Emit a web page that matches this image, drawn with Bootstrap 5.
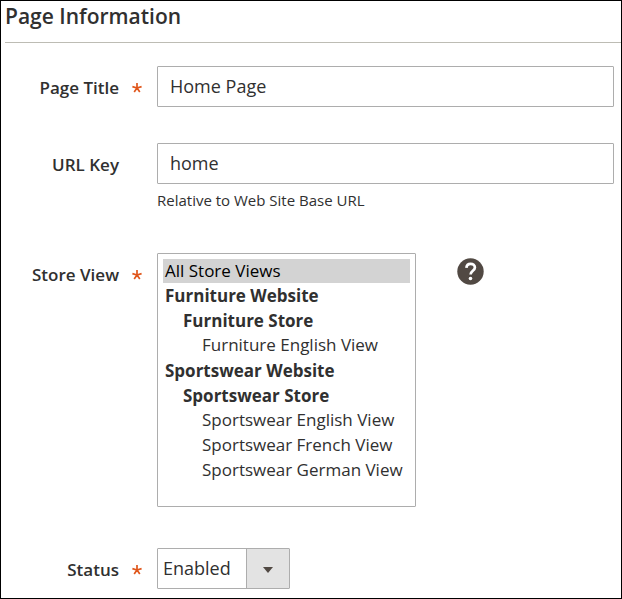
<!DOCTYPE html>
<html lang="en">
<head>
<meta charset="utf-8">
<meta name="viewport" content="width=device-width, initial-scale=1">
<title>Page Information</title>
<link href="https://cdn.jsdelivr.net/npm/bootstrap@5.3.0/dist/css/bootstrap.min.css" rel="stylesheet">
<style>
body { font-family: "Open Sans", "Noto Sans", sans-serif; color: #303030; background: #fff; }
.page-frame { border: 1px solid #000; min-height: 100vh; padding-left: 4px; }
.section-title { font-size: 21px; line-height: 30px; font-weight: 600; margin: 0; padding-bottom: 11px; border-bottom: 1px solid #bdbcb4; }
.field-list { display: grid; row-gap: 34px; padding-top: 23px; }
.field-row { display: grid; grid-template-columns: 114px 38px minmax(0, 1fr); padding-right: 7px; }
.field-label { font-size: 17px; line-height: 43px; font-weight: 600; text-align: right; }
.required-mark { color: #e0561b; padding-left: 13px; padding-top: 17px; line-height: 0; }
.field-row .form-control, .field-row .form-select { border: 1px solid #adadad; border-radius: 1px; font-size: 18px; color: #303030; background-color: #fff; }
.text-field { height: 41px; padding: 0 12px 1px; }
.field-note { font-size: 15px; line-height: 20px; margin: 6px 0 9px; }
.field-row .form-select.store-list[multiple][size] { width: 259px; height: 254px; padding: 5px; overflow: hidden; background-image: none; font-size: 17px; margin-bottom: 7px; }
.store-list option { height: 24px; min-height: 24px; line-height: 24px; padding: 0 2px; }
.store-list optgroup { font-weight: 700; padding: 1px 0 0; }
.store-list .store-group { padding-top: 1px; padding-left: 18px; }
.store-list optgroup option { height: 25px; min-height: 25px; font-weight: 400; padding-left: 21px; }
.store-list option:checked { background: #d3d3d3 linear-gradient(#d3d3d3, #d3d3d3); color: #000; }
.field-row .status-select {
  width: 133px; height: 41px; padding: 0 44px 1px 5px;
  background-image: url("data:image/svg+xml,%3Csvg xmlns='http://www.w3.org/2000/svg' viewBox='0 0 43 39'%3E%3Cpath fill='%23e3e3e3' d='M1 0h42v39H1z'/%3E%3Cpath fill='%23adadad' d='M0 0h1v39H0z'/%3E%3Cpath fill='%23514943' d='M17 18h10l-5 6z'/%3E%3C/svg%3E");
  background-size: 43px 39px; background-position: right center;
}
.help-button { margin-left: 41px; margin-top: 5px; width: 27px; height: 27px; }
</style>
</head>
<body>
<main class="page-frame">
  <h1 class="section-title">Page Information</h1>
  <form class="field-list">
    <div class="field-row">
      <label class="field-label" for="page-title">Page Title</label>
      <span class="required-mark"><svg width="10" height="10" viewBox="0 0 10 10" role="img" aria-label="required"><path d="M5 5V0M5 5L.4 3.6M5 5l4.6-1.4M5 5L2.2 9M5 5l2.8 4" stroke="currentColor" stroke-width="1.7" fill="none"/></svg></span>
      <div><input class="form-control text-field" id="page-title" type="text" value="Home Page" required></div>
    </div>
    <div class="field-row">
      <label class="field-label" for="url-key">URL Key</label>
      <span></span>
      <div>
        <input class="form-control text-field" id="url-key" type="text" value="home" aria-describedby="url-note">
        <div class="field-note" id="url-note">Relative to Web Site Base URL</div>
      </div>
    </div>
    <div class="field-row">
      <label class="field-label" for="store-view">Store View</label>
      <span class="required-mark"><svg width="10" height="10" viewBox="0 0 10 10" role="img" aria-label="required"><path d="M5 5V0M5 5L.4 3.6M5 5l4.6-1.4M5 5L2.2 9M5 5l2.8 4" stroke="currentColor" stroke-width="1.7" fill="none"/></svg></span>
      <div class="d-flex align-items-start">
        <select class="form-select store-list flex-shrink-0" id="store-view" multiple size="10">
          <option selected>All Store Views</option>
          <optgroup label="Furniture Website"></optgroup>
          <optgroup class="store-group" label="Furniture Store">
            <option>Furniture English View</option>
          </optgroup>
          <optgroup label="Sportswear Website"></optgroup>
          <optgroup class="store-group" label="Sportswear Store">
            <option>Sportswear English View</option>
            <option>Sportswear French View</option>
            <option>Sportswear German View</option>
          </optgroup>
        </select>
        <button class="btn border-0 p-0 lh-1 help-button flex-shrink-0" type="button" aria-label="Help">
          <svg class="d-block" width="27" height="27" viewBox="0 0 27 27" aria-hidden="true"><circle cx="13.5" cy="13.5" r="13.2" fill="#514943"/><path d="M9.4 9.9C9.6 7.2 11.3 5.8 13.6 5.8c2.5 0 4.3 1.5 4.3 3.7 0 3.3-4.3 3.3-4.3 7" fill="none" stroke="#fff" stroke-width="2.7"/><circle cx="13.5" cy="20.5" r="1.8" fill="#fff"/></svg>
        </button>
      </div>
    </div>
    <div class="field-row">
      <label class="field-label" for="status">Status</label>
      <span class="required-mark"><svg width="10" height="10" viewBox="0 0 10 10" role="img" aria-label="required"><path d="M5 5V0M5 5L.4 3.6M5 5l4.6-1.4M5 5L2.2 9M5 5l2.8 4" stroke="currentColor" stroke-width="1.7" fill="none"/></svg></span>
      <select class="form-select status-select" id="status" required>
        <option selected>Enabled</option>
        <option>Disabled</option>
      </select>
    </div>
  </form>
</main>
</body>
</html>
